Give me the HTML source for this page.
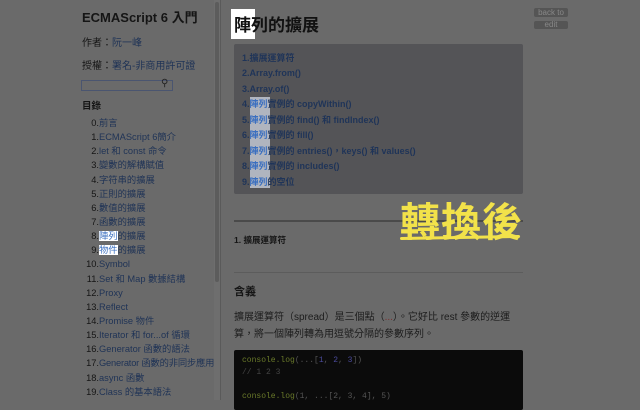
<!DOCTYPE html><html><head><meta charset="utf-8"><style>
body{margin:0;width:640px;height:400px;overflow:hidden;background:#6a6a6a;font-family:"Liberation Sans","Noto Sans CJK TC",sans-serif;color:#151515;position:relative}
.a{color:#1f3356}
#sb{position:absolute;left:0;top:0;width:214px;height:400px}
#scr{position:absolute;left:214px;top:0;width:6px;height:400px;background:#6e6e6e}
#thumb{position:absolute;left:215px;top:2px;width:4px;height:280px;background:#5c5c5c;border-radius:2px}
#bd{position:absolute;left:220px;top:0;width:1px;height:400px;background:#5a5a5a}
.t{position:absolute;white-space:nowrap}
ol{list-style:none;margin:0;padding:0;position:absolute;left:82px;top:116px;font-size:9.3px;line-height:14.15px;white-space:nowrap}
ol li{height:14.15px}
ol li span.n{display:inline-block;width:17px;text-align:right;color:#151515}
.hl{background:#fff;color:#3a6fc0}
#toc{position:absolute;left:234px;top:44px;width:289px;height:150px;background:#545457;border-radius:2px}
#toc div{position:absolute;left:8px;font-size:9px;line-height:12px;font-weight:bold;color:#1f3458;white-space:nowrap}
#toc div.hlb{left:16px;top:53px;width:20px;height:91px;background:rgba(215,222,235,.7)}
#toc div span{color:#3a6fc0}
#code{position:absolute;left:234px;top:350px;width:289px;height:60px;background:#0b0b0b;border-radius:2px;font-family:"Liberation Mono",monospace;font-size:8px}
</style></head><body>
<div id="sb">
<div class="t" style="left:82px;top:7px;font-size:13px;font-weight:bold">ECMAScript 6 入門</div>
<div class="t" style="left:82px;top:34px;font-size:10px">作者：<span class="a">阮一峰</span></div>
<div class="t" style="left:82px;top:57px;font-size:10px">授權：<span class="a">署名-非商用許可證</span></div>
<div class="t" style="left:81px;top:80px;width:90px;height:9px;border:1px solid #4a5570"></div>
<div class="t" style="left:161px;top:78px;font-size:10px;color:#222">&#9906;</div>
<div class="t" style="left:82px;top:98px;font-size:9.5px;font-weight:bold">目錄</div>
<ol>
<li><span class="n">0.</span><span class="a">前言</span></li>
<li><span class="n">1.</span><span class="a">ECMAScript 6簡介</span></li>
<li><span class="n">2.</span><span class="a">let 和 const 命令</span></li>
<li><span class="n">3.</span><span class="a">變數的解構賦值</span></li>
<li><span class="n">4.</span><span class="a">字符串的擴展</span></li>
<li><span class="n">5.</span><span class="a">正則的擴展</span></li>
<li><span class="n">6.</span><span class="a">數值的擴展</span></li>
<li><span class="n">7.</span><span class="a">函數的擴展</span></li>
<li><span class="n">8.</span><span class="hl">陣列</span><span class="a">的擴展</span></li>
<li><span class="n">9.</span><span class="hl">物件</span><span class="a">的擴展</span></li>
<li><span class="n">10.</span><span class="a">Symbol</span></li>
<li><span class="n">11.</span><span class="a">Set 和 Map 數據結構</span></li>
<li><span class="n">12.</span><span class="a">Proxy</span></li>
<li><span class="n">13.</span><span class="a">Reflect</span></li>
<li><span class="n">14.</span><span class="a">Promise 物件</span></li>
<li><span class="n">15.</span><span class="a">Iterator 和 for...of 循環</span></li>
<li><span class="n">16.</span><span class="a">Generator 函數的語法</span></li>
<li><span class="n">17.</span><span class="a" style="letter-spacing:-0.2px">Generator 函數的非同步應用</span></li>
<li><span class="n">18.</span><span class="a">async 函數</span></li>
<li><span class="n">19.</span><span class="a">Class 的基本語法</span></li>
</ol>
</div>
<div id="scr"></div><div id="thumb"></div><div id="bd"></div>
<div class="t" style="left:231px;top:9px;width:24px;height:30px;background:#fff"></div>
<div class="t" style="left:234px;top:11px;font-size:17px;font-weight:bold;color:#111">陣列的擴展</div>
<div class="t" style="left:534px;top:8px;width:34px;height:9px;background:#555;border-radius:2px;color:#888;font-size:8px;text-align:center;line-height:9px">back to</div>
<div class="t" style="left:534px;top:21px;width:34px;height:8px;background:#555;border-radius:2px;color:#888;font-size:8px;text-align:center;line-height:8px">edit</div>
<div id="toc">
<div class="hlb"></div>
<div style="top:8px">1.擴展運算符</div>
<div style="top:23px">2.Array.from()</div>
<div style="top:39px">3.Array.of()</div>
<div style="top:54px">4.<span>陣列</span>實例的 copyWithin()</div>
<div style="top:70px">5.<span>陣列</span>實例的 find() 和 findIndex()</div>
<div style="top:85px">6.<span>陣列</span>實例的 fill()</div>
<div style="top:101px">7.<span>陣列</span>實例的 entries()，keys() 和 values()</div>
<div style="top:116px">8.<span>陣列</span>實例的 includes()</div>
<div style="top:132px">9.<span>陣列</span>的空位</div>
</div>
<div class="t" style="left:234px;top:220px;width:289px;height:2px;background:#4a4a4a"></div>
<div class="t" style="left:234px;top:234px;font-size:8.5px;font-weight:bold">1. 擴展運算符</div>
<div class="t" style="left:234px;top:272px;width:289px;height:1px;background:#5c5c5c"></div>
<div class="t" style="left:234px;top:283px;font-size:11px;font-weight:bold">含義</div>
<div class="t" style="left:234px;top:309px;font-size:10px;line-height:17px;color:#1c1c1c">擴展運算符（spread）是三個點（<span style="color:#7a3030">...</span>）。它好比 rest 參數的逆運<br>算，將一個陣列轉為用逗號分隔的參數序列。</div>
<div id="code"><div class="t" style="left:8px;top:6px;color:#6a7a2a">console.log<span style="color:#555">(...[</span><span style="color:#4a4a9a">1</span><span style="color:#555">, </span><span style="color:#4a4a9a">2</span><span style="color:#555">, </span><span style="color:#4a4a9a">3</span><span style="color:#555">])</span></div><div class="t" style="left:8px;top:18px;color:#444">// 1 2 3</div><div class="t" style="left:8px;top:42px;color:#6a7a2a">console.log<span style="color:#555">(1, ...[2, 3, 4], 5)</span></div></div>
<div class="t" style="left:400px;top:190px;font-size:40px;font-weight:bold;color:#f2e24a;letter-spacing:1px;font-family:'Noto Sans CJK TC',sans-serif">轉換後</div>
<div class="t" style="left:400px;top:236px;width:120px;height:3px;background:#f2e24a;border-radius:2px;transform:rotate(-1deg)"></div>
</body></html>
